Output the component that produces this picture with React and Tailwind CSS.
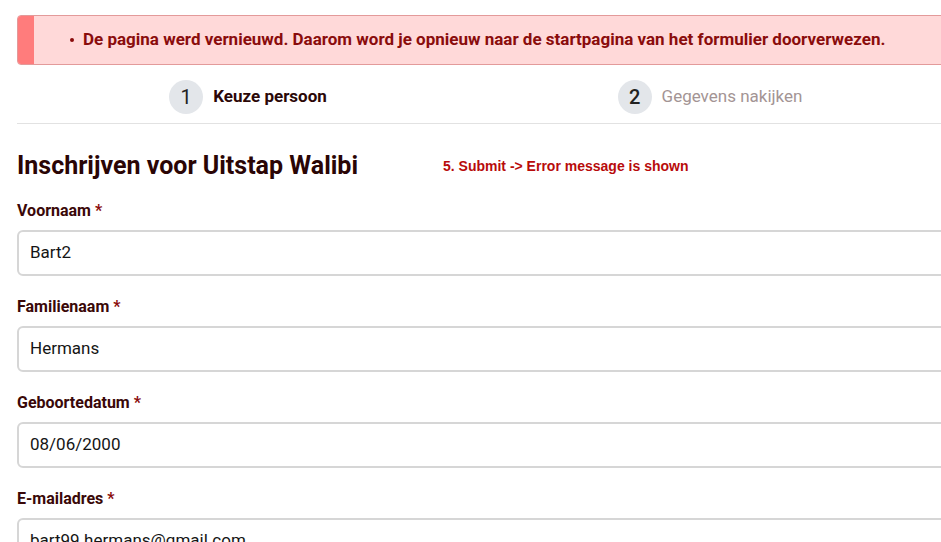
export default function App() {
  const fields = [
    { label: "Voornaam", value: "Bart2" },
    { label: "Familienaam", value: "Hermans" },
    { label: "Geboortedatum", value: "08/06/2000" },
    { label: "E-mailadres", value: "bart99.hermans@gmail.com" },
  ];

  return (
    <div className="h-screen w-full overflow-hidden bg-white font-['Roboto',sans-serif]">
      {/* error alert */}
      <div className="ml-[17px] mt-[15px] flex h-[50px] w-[960px] overflow-hidden rounded-[4px] border border-[#e39a9a] bg-[#ffd9d9]">
        <div className="w-[16px] shrink-0 bg-[#ff7c7c]" />
        <ul className="flex items-center pl-[36px]">
          <li className="flex items-center text-[17px] font-bold text-[#8a0c0c]">
            <span className="mr-[9px] h-[4px] w-[4px] rounded-full bg-[#8a0c0c]" />
            De pagina werd vernieuwd. Daarom word je opnieuw naar de startpagina van het formulier doorverwezen.
          </li>
        </ul>
      </div>

      {/* steps */}
      <div className="ml-[17px] flex h-[59px] w-[924px] items-start border-b border-[#e2e2e2] pt-[15px]">
        <div className="flex flex-1 items-center justify-center gap-[10px]">
          <span className="flex h-[34px] w-[34px] items-center justify-center rounded-full bg-[#e3e6ea] text-[20px] text-[#222]">1</span>
          <span className="text-[17px] font-bold text-[#2b0707]">Keuze persoon</span>
        </div>
        <div className="flex flex-1 items-center justify-center gap-[10px]">
          <span className="flex h-[34px] w-[34px] items-center justify-center rounded-full bg-[#e3e6ea] text-[20px] font-medium text-[#222]">2</span>
          <span className="text-[17px] text-[#a39494]">Gegevens nakijken</span>
        </div>
      </div>

      {/* form */}
      <div className="ml-[17px] w-[960px]">
        <div className="mt-[27px] flex items-center">
          <h1 className="w-[426px] text-[25px] leading-[30px] font-bold text-[#2a0505]">Inschrijven voor Uitstap Walibi</h1>
          <span className="font-['Liberation_Sans',sans-serif] text-[14px] font-bold text-[#b80b0b]">5. Submit -&gt; Error message is shown</span>
        </div>

        <div className="mt-[18px]">
          {fields.map(f => (
            <div key={f.label} className="mb-[19px]">
              <label className="mb-[7px] block text-[16px] leading-[24px] font-bold text-[#3a0808]">
                {f.label} <span className="text-[#8a0c0c]">*</span>
              </label>
              <div className="flex h-[46px] items-center rounded-[6px] border-2 border-[#d6d6d6] px-[11px] text-[17px] text-[#151515]">
                {f.value}
              </div>
            </div>
          ))}
        </div>
      </div>
    </div>
  );
}
